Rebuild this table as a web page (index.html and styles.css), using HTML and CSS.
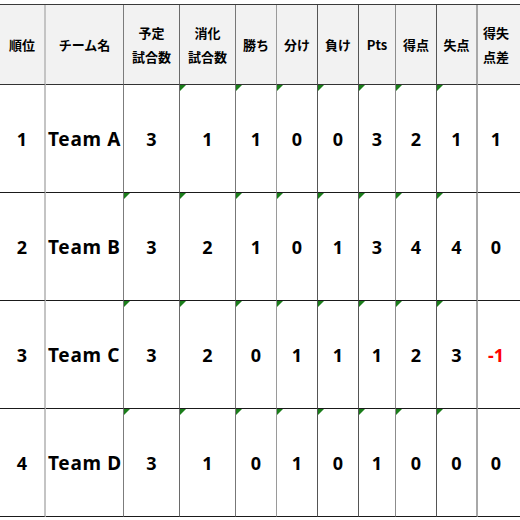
FILE: index.html
```html
<!DOCTYPE html>
<html lang="ja">
<head>
<meta charset="utf-8">
<title>順位表</title>
<link rel="stylesheet" href="styles.css">
</head>
<body>
<div class="sheet">
  <div class="cell head">順位</div>
  <div class="cell head">チーム名</div>
  <div class="cell head two">予定<br>試合数</div>
  <div class="cell head two">消化<br>試合数</div>
  <div class="cell head">勝ち</div>
  <div class="cell head">分け</div>
  <div class="cell head">負け</div>
  <div class="cell head">Pts</div>
  <div class="cell head">得点</div>
  <div class="cell head">失点</div>
  <div class="cell head two">得失<br>点差</div>

  <div class="cell num">1</div>
  <div class="cell team">Team A</div>
  <div class="cell num">3</div>
  <div class="cell num flag">1</div>
  <div class="cell num flag">1</div>
  <div class="cell num flag">0</div>
  <div class="cell num flag">0</div>
  <div class="cell num flag">3</div>
  <div class="cell num flag">2</div>
  <div class="cell num flag">1</div>
  <div class="cell num">1</div>

  <div class="cell num">2</div>
  <div class="cell team">Team B</div>
  <div class="cell num flag">3</div>
  <div class="cell num flag">2</div>
  <div class="cell num flag">1</div>
  <div class="cell num flag">0</div>
  <div class="cell num flag">1</div>
  <div class="cell num flag">3</div>
  <div class="cell num flag">4</div>
  <div class="cell num flag">4</div>
  <div class="cell num">0</div>

  <div class="cell num">3</div>
  <div class="cell team">Team C</div>
  <div class="cell num flag">3</div>
  <div class="cell num flag">2</div>
  <div class="cell num flag">0</div>
  <div class="cell num flag">1</div>
  <div class="cell num flag">1</div>
  <div class="cell num flag">1</div>
  <div class="cell num flag">2</div>
  <div class="cell num flag">3</div>
  <div class="cell num neg">-1</div>

  <div class="cell num">4</div>
  <div class="cell team">Team D</div>
  <div class="cell num flag">3</div>
  <div class="cell num flag">1</div>
  <div class="cell num flag">0</div>
  <div class="cell num flag">1</div>
  <div class="cell num flag">0</div>
  <div class="cell num flag">1</div>
  <div class="cell num flag">0</div>
  <div class="cell num flag">0</div>
  <div class="cell num">0</div>
</div>
</body>
</html>
```

FILE: styles.css
```css
html, body {
  margin: 0;
  padding: 0;
  background: #ffffff;
}

body {
  font-family: "Noto Sans", "Noto Sans CJK JP", sans-serif;
  color: #000;
}

.sheet {
  margin-top: 4px;
  width: 520px;
  display: grid;
  grid-template-columns: 46px 78px 56px 56px 41px 41px 41px 37px 41px 41px 42px;
  grid-template-rows: 80px 108px 108px 108px 108px;
  border-top: 1px solid #3a3a3a;
}

.cell {
  position: relative;
  box-sizing: border-box;
  display: flex;
  align-items: center;
  justify-content: center;
  border-right: 1px solid #6e6e6e;
  border-bottom: 1px solid #1a1a1a;
  background: #ffffff;
}

.head {
  background: #f2f2f2;
  font-family: "Noto Sans CJK JP", sans-serif;
  font-weight: 700;
  font-size: 13px;
  line-height: 24px;
  text-align: center;
  border-bottom-color: #333333;
}

.num {
  font-weight: 700;
  font-size: 18px;
}

.team {
  justify-content: flex-start;
  padding-left: 2px;
  font-weight: 700;
  font-size: 19px;
  letter-spacing: 0.7px;
  white-space: nowrap;
}

.neg {
  color: #ff0000;
}

/* column separators */
.cell:nth-child(11n+1) {
  border-right: 2px solid #c4c4c4;
}
.cell:nth-child(11n+2) { border-right-color: #7c7c7c; }
.cell:nth-child(11n+3) { border-right-color: #6a6a6a; }
.cell:nth-child(11n+4) { border-right-color: #777777; }
.cell:nth-child(11n+5) { border-right-color: #9a9a9a; }
.cell:nth-child(11n+6) { border-right-color: #555555; }
.cell:nth-child(11n+7) { border-right-color: #555555; }
.cell:nth-child(11n+8) { border-right-color: #8c8c8c; }
.cell:nth-child(11n+9) { border-right-color: #555555; }
.cell:nth-child(11n+10) { border-right: 2px solid #a8a8a8; }
.cell:nth-child(11n) {
  border-right: none;
  padding-right: 6px;
}

/* green error-indicator triangle */
.flag::before {
  content: "";
  position: absolute;
  top: 0;
  left: 0;
  width: 0;
  height: 0;
  border-top: 6px solid #1a7d1a;
  border-right: 6px solid transparent;
}
```
